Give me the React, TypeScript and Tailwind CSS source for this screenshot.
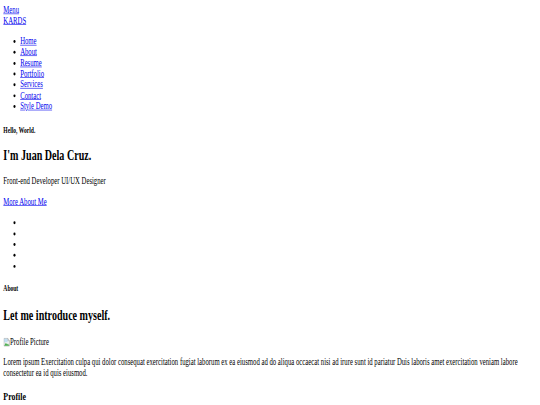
const navLinks = ["Home", "About", "Resume", "Portfolio", "Services", "Contact", "Style Demo"];

function BrokenImage() {
  // browser's broken-image glyph
  return (
    <svg width="16" height="16" viewBox="0 0 16 16" className="inline-block align-baseline">
      <path d="M1.5 1.5h9l4 4v9h-13z" fill="#f4f4f4" stroke="#9a9a9a" />
      <path d="M10.5 1.5v4h4" fill="none" stroke="#9a9a9a" />
      <path d="M2 14l4-5 3 3 2-2 3 4z" fill="#4caf50" />
      <rect x="2" y="2" width="8" height="6" fill="#9fd0f0" opacity="0.6" />
    </svg>
  );
}

export default function App() {
  const link = "text-[#0000ee] underline";
  return (
    <div className="h-screen w-full overflow-hidden bg-white">
      <div className="w-[1280px] origin-top-left [transform:scale(0.42,0.59)] p-2 font-['Liberation_Serif','Times_New_Roman',serif] text-[16px] leading-[1.15] text-black">
        {/* header */}
        <div>
          <a href="#" className={link}>Menu</a>
        </div>
        <div>
          <a href="#" className={link}>KARDS</a>
        </div>
        <ul className="my-4 list-disc pl-10">
          {navLinks.map((l) => (
            <li key={l}>
              <a href="#" className={link}>{l}</a>
            </li>
          ))}
        </ul>

        {/* hero */}
        <h5 className="mt-[23px] mb-[22px] text-[13.28px] font-bold">Hello, World.</h5>
        <h2 className="mt-[22px] mb-[21px] text-[24px] font-bold">I'm Juan Dela Cruz.</h2>
        <p className="my-4">Front-end Developer UI/UX Designer</p>
        <p className="my-4">
          <a href="#" className={link}>More About Me</a>
        </p>
        <ul className="mt-[17px] mb-4 list-disc pl-10">
          {[0, 1, 2, 3, 4].map((i) => (
            <li key={i}>{"\u200b"}</li>
          ))}
        </ul>

        {/* about */}
        <h5 className="my-[22.18px] text-[13.28px] font-bold">About</h5>
        <h2 className="mt-[24px] mb-[19px] text-[24px] font-bold">Let me introduce myself.</h2>
        <p className="mt-4 mb-0">
          <span className="inline-flex h-[20px] items-end">
            <BrokenImage />
            <span>Profile Picture</span>
          </span>
        </p>
        <p className="mt-[12.5px] mb-4">
          Lorem ipsum Exercitation culpa qui dolor consequat exercitation fugiat laborum ex ea eiusmod ad do aliqua
          occaecat nisi ad irure sunt id pariatur Duis laboris amet exercitation veniam labore consectetur ea id quis
          eiusmod.
        </p>
        <h3 className="mt-[18.72px] mb-[18.72px] text-[18.72px] font-bold">Profile</h3>
        <p className="my-4">
          Lorem ipsum Exercitation culpa qui dolor consequat exercitation fugiat laborum ex ea eiusmod ad do aliqua.
        </p>
      </div>
    </div>
  );
}
